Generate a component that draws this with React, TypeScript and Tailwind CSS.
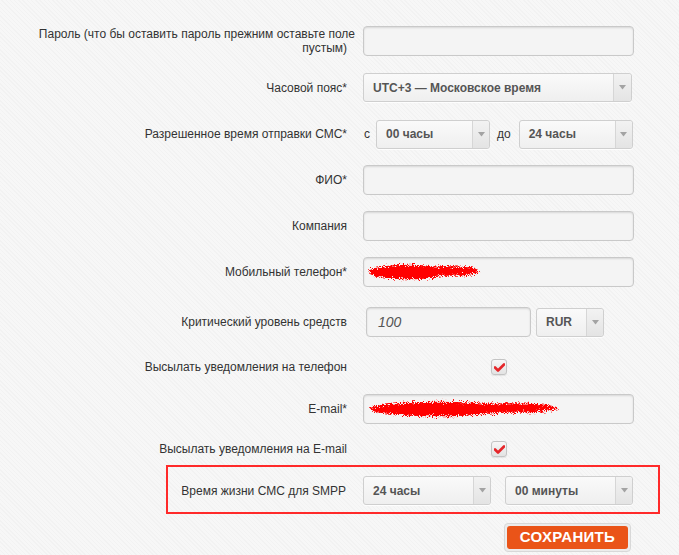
import { type ReactNode } from 'react';

const font = "font-['Liberation_Sans',Arial,sans-serif]";

function Arrow() {
  return (
    <svg width="7" height="5" viewBox="0 0 7 5" className="block">
      <path d="M0 0h7L3.5 4.5z" fill="#a3a3a3" />
    </svg>
  );
}

function Select({ value, width, arrowW = 17 }: { value: string; width: string; arrowW?: number }) {
  return (
    <div
      className={`${width} h-[29px] flex rounded-[3px] border border-[#cfcfcf] bg-gradient-to-b from-[#fafafa] to-[#efefef] shadow-[0_1px_0_rgba(255,255,255,0.8)]`}
    >
      <div className="flex-1 flex items-center pl-[9px] text-[12px] font-bold text-[#555] whitespace-nowrap overflow-hidden">
        {value}
      </div>
      <div
        style={{ width: arrowW }}
        className="flex items-center justify-center border-l border-[#d6d6d6] bg-gradient-to-b from-[#f2f2f2] to-[#e4e4e4] rounded-r-[3px]"
      >
        <Arrow />
      </div>
    </div>
  );
}

function Scribble({ w, h, id }: { w: number; h: number; id: string }) {
  return (
    <svg width={w} height={h} viewBox={`0 0 ${w} ${h}`} className="absolute left-[2px] top-1/2 -translate-y-1/2">
      <defs>
        <filter id={id} x="-10%" y="-30%" width="120%" height="160%">
          <feTurbulence type="fractalNoise" baseFrequency="1.2" numOctaves="2" seed="5" result="n" />
          <feDisplacementMap in="SourceGraphic" in2="n" scale="9" />
        </filter>
      </defs>
      <g filter={`url(#${id})`} fill="#ff0000">
        <ellipse cx={w * 0.36} cy={h / 2} rx={w * 0.34} ry={h * 0.3} />
        <ellipse cx={w * 0.7} cy={h / 2 - 1} rx={w * 0.26} ry={h * 0.2} />
      </g>
    </svg>
  );
}

function Input({ children, width = 'w-[271px]', italic }: { children?: ReactNode; width?: string; italic?: boolean }) {
  return (
    <div
      className={`${width} h-[30px] relative flex items-center rounded-[4px] border border-[#c9c9c9] bg-[#f4f4f4] shadow-[inset_0_1px_2px_rgba(0,0,0,0.12)] pl-[11px] text-[14px] text-[#555] ${italic ? 'italic' : ''}`}
    >
      {children}
    </div>
  );
}

function Checkbox() {
  return (
    <div className="w-[16px] h-[16px] flex items-center justify-center rounded-[3px] border border-[#c4c4c4] bg-gradient-to-b from-[#f7f7f7] to-[#e3e3e3] shadow-[0_1px_1px_rgba(0,0,0,0.08)]">
      <svg width="11" height="9" viewBox="0 0 11 9">
        <path d="M1 4.5l3 3 6-6" stroke="#e5262a" strokeWidth="2.6" fill="none" strokeLinecap="round" strokeLinejoin="round" />
      </svg>
    </div>
  );
}

function Row({ label, h, children }: { label: ReactNode; h: string; children: ReactNode }) {
  return (
    <div className={`${h} flex items-center`}>
      <div className="w-[347px] text-right text-[12px] leading-[14px] text-[#333]">{label}</div>
      <div className="ml-4 flex items-center">{children}</div>
    </div>
  );
}

export default function App() {
  return (
    <div
      className={`${font} min-h-screen bg-[#f7f7f7] bg-[repeating-linear-gradient(45deg,rgba(0,0,0,0.018)_0px,rgba(0,0,0,0.018)_1px,transparent_1px,transparent_3px)] pt-[17px]`}
    >
      <Row
        h="h-[47px]"
        label={
          <>
            <div className="-mr-2 -ml-1">Пароль (что бы оставить пароль прежним оставьте поле</div>
            <div>пустым)</div>
          </>
        }
      >
        <Input />
      </Row>

      <Row h="h-[47px]" label="Часовой пояс*">
        <Select value="UTC+3 — Московское время" width="w-[269px]" arrowW={18} />
      </Row>

      <Row h="h-[46px]" label="Разрешенное время отправки СМС*">
        <span className="text-[12px] text-[#333] ml-[1px] mr-[6px]">с</span>
        <Select value="00 часы" width="w-[114px]" />
        <span className="text-[12px] text-[#333] ml-[7px] mr-[8px]">до</span>
        <Select value="24 часы" width="w-[114px]" />
      </Row>

      <Row h="h-[46px]" label="ФИО*">
        <Input />
      </Row>

      <Row h="h-[46px]" label="Компания">
        <Input />
      </Row>

      <Row h="h-[46px]" label="Мобильный телефон*">
        <Input>
          <Scribble w={118} h={24} id="s1" />
        </Input>
      </Row>

      <Row h="h-[54px]" label="Критический уровень средств">
        <div className="ml-[3px] flex items-center gap-[5px]">
          <Input width="w-[165px]" italic>
            100
          </Input>
          <Select value="RUR" width="w-[68px]" />
        </div>
      </Row>

      <Row h="h-[36px]" label="Высылать уведомления на телефон">
        <div className="ml-[128px]">
          <Checkbox />
        </div>
      </Row>

      <Row h="h-[48px]" label="E-mail*">
        <Input>
          <Scribble w={200} h={24} id="s2" />
        </Input>
      </Row>

      <Row h="h-[32px]" label="Высылать уведомления на E-mail">
        <div className="ml-[128px]">
          <Checkbox />
        </div>
      </Row>

      <div className="ml-[166px] w-[494px] h-[49px] border-2 border-[#ff2a2a] flex items-center pt-[2px]">
        <div className="w-[178px] text-right text-[12px] text-[#333]">Время жизни СМС для SMPP</div>
        <div className="ml-[17px] flex items-center gap-[14px]">
          <Select value="24 часы" width="w-[128px]" />
          <Select value="00 минуты" width="w-[128px]" />
        </div>
      </div>

      <div className="mt-[9px] ml-[504px] w-[127px] h-[29px] rounded-[4px] border border-[#d8d8d8] bg-[#ececec] p-[2px]">
        <div className="h-full rounded-[3px] bg-[#ea5418] flex items-center justify-center text-white font-bold text-[15px] tracking-[0.3px]">
          СОХРАНИТЬ
        </div>
      </div>
    </div>
  );
}
